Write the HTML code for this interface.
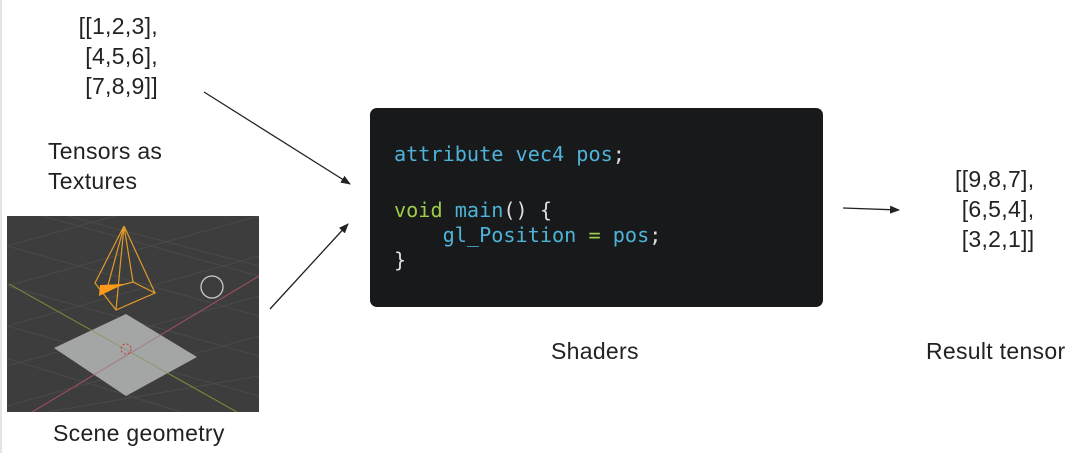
<!DOCTYPE html>
<html><head><meta charset="utf-8"><style>
body{margin:0;width:1072px;height:453px;background:#fff;position:relative;overflow:hidden;font-family:"Liberation Sans",sans-serif;color:#222;}
.t{position:absolute;font-size:23px;line-height:30px;white-space:pre;letter-spacing:0.3px}
.code{position:absolute;left:370px;top:108px;width:453px;height:199px;background:#18191b;border-radius:7px;}
.c{position:absolute;font-family:"DejaVu Sans Mono",monospace;font-size:20.2px;white-space:pre;color:#4eb3d8;}
.g{color:#9ccc4a}.w{color:#ddd}
</style></head><body>
<div style="position:absolute;left:0;top:0;width:2px;height:453px;background:#e4e4e4"></div>
<div class="t" style="right:914px;top:11px;text-align:right">[[1,2,3],
 [4,5,6],
 [7,8,9]]</div>
<div class="t" style="left:48px;top:136px">Tensors as
Textures</div>
<svg style="position:absolute;left:7px;top:216px" width="252" height="196" viewBox="0 0 252 196">
<rect width="252" height="196" fill="#3d3d3d"/>
<g stroke="#4a4a4a" stroke-width="1">
<path d="M0 30 L252 -40 M0 70 L252 0 M0 110 L252 40 M0 150 L252 80 M0 190 L252 120 M40 196 L252 160 M0 -10 L252 60 M0 30 L252 100 M0 70 L252 140 M0 110 L252 180 M-40 130 L252 220 M60 0 L252 50"/>
</g>
<path d="M2 68 L230 196" stroke="#7a8e3a" stroke-width="1"/>
<path d="M25 196 L252 60" stroke="#a05060" stroke-width="1"/>
<path d="M47 132 L119 98 L190 141 L119 180 Z" fill="#a4a5a5"/>
<path d="M2 68 L230 196" stroke="#7a8e3a" stroke-width="1" opacity=".5"/>
<path d="M25 196 L252 60" stroke="#a05060" stroke-width="1" opacity=".5"/>
<circle cx="119" cy="133" r="5" fill="none" stroke="#c33" stroke-width="1" stroke-dasharray="2 2"/>
<g fill="none" stroke="#e09a2a" stroke-width="1.2">
<path d="M117 10 L88 67 L109 94 L148 77 L126 66 L100 73 Z M117 10 L109 94 M117 10 L148 77 M117 10 L126 66 M117 10 L88 67"/>
</g>
<path d="M93 69 L117 68 L92 80 Z" fill="#ff9a1a"/>
<circle cx="205" cy="71" r="11" fill="none" stroke="#ccc" stroke-width="1.3"/>
</svg>
<div class="t" style="left:53px;top:418px">Scene geometry</div>
<svg style="position:absolute;left:0;top:0" width="1072" height="453">
<defs><marker id="a" markerWidth="10" markerHeight="8" refX="9" refY="4" orient="auto" markerUnits="userSpaceOnUse"><path d="M0 0 L10 4 L0 8 Z" fill="#222"/></marker></defs>
<g stroke="#222" stroke-width="1.3" marker-end="url(#a)">
<line x1="204" y1="92" x2="350" y2="184"/>
<line x1="270" y1="309" x2="348" y2="224"/>
<line x1="843" y1="208" x2="899" y2="210"/>
</g></svg>
<div class="code">
<div class="c" style="left:24px;top:34px">attribute vec4 pos<span class="w">;</span></div>
<div class="c" style="left:24px;top:90px"><span class="g">void</span> main<span class="w">()</span> <span class="w">{</span></div>
<div class="c" style="left:24px;top:115px">    gl_Position <span class="g">=</span> pos<span class="w">;</span></div>
<div class="c w" style="left:24px;top:140px">}</div>
</div>
<div class="t" style="left:551px;top:336px">Shaders</div>
<div class="t" style="left:955px;top:164px;text-align:right">[[9,8,7],
 [6,5,4],
 [3,2,1]]</div>
<div class="t" style="left:926px;top:336px">Result tensor</div>
</body></html>
